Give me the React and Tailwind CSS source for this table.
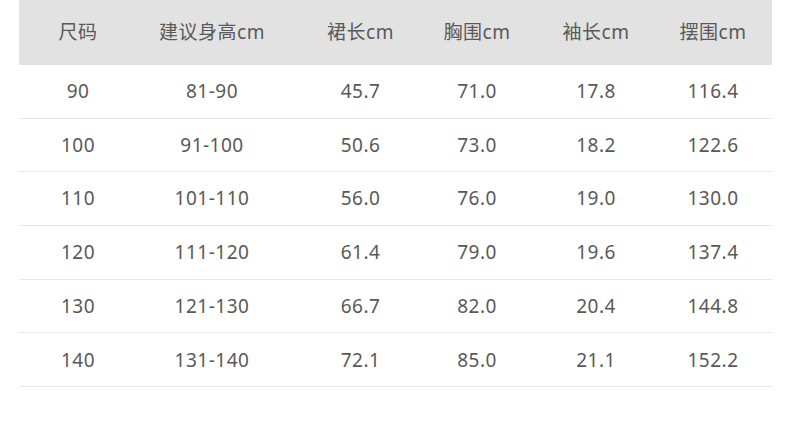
const headers = ['尺码', '建议身高cm', '裙长cm', '胸围cm', '袖长cm', '摆围cm']

const rows = [
  ['90', '81-90', '45.7', '71.0', '17.8', '116.4'],
  ['100', '91-100', '50.6', '73.0', '18.2', '122.6'],
  ['110', '101-110', '56.0', '76.0', '19.0', '130.0'],
  ['120', '111-120', '61.4', '79.0', '19.6', '137.4'],
  ['130', '121-130', '66.7', '82.0', '20.4', '144.8'],
  ['140', '131-140', '72.1', '85.0', '21.1', '152.2'],
]

// per-column offsets so each cell centre lands where the reference has it
const cellClass = [
  'w-[118px] shrink-0 text-center',
  'w-[118px] shrink-0 text-center ml-[16px]',
  'w-[118px] shrink-0 text-center ml-[30.5px]',
  'w-[118px] shrink-0 text-center ml-[-1.5px]',
  'w-[118px] shrink-0 text-center ml-[1px]',
  'w-[118px] shrink-0 text-center ml-[-1px]',
]

export default function App() {
  return (
    <div
      className="w-[790px] h-[431px] bg-white text-[#595959] text-[19px] tracking-[0.5px]"
      style={{ fontFamily: '"Noto Sans", "Noto Sans CJK SC", sans-serif' }}
    >
      <div className="ml-[19px] w-[753px]">
        <div className="flex h-[65px] items-center bg-[#e2e2e2]">
          {headers.map((h, i) => (
            <div key={h} className={cellClass[i]}>
              {h}
            </div>
          ))}
        </div>
        {rows.map((row) => (
          <div key={row[0]} className="flex h-[53.7px] items-center border-b border-[#e8e8e8]">
            {row.map((cell, i) => (
              <div key={i} className={cellClass[i]}>
                {cell}
              </div>
            ))}
          </div>
        ))}
      </div>
    </div>
  )
}
